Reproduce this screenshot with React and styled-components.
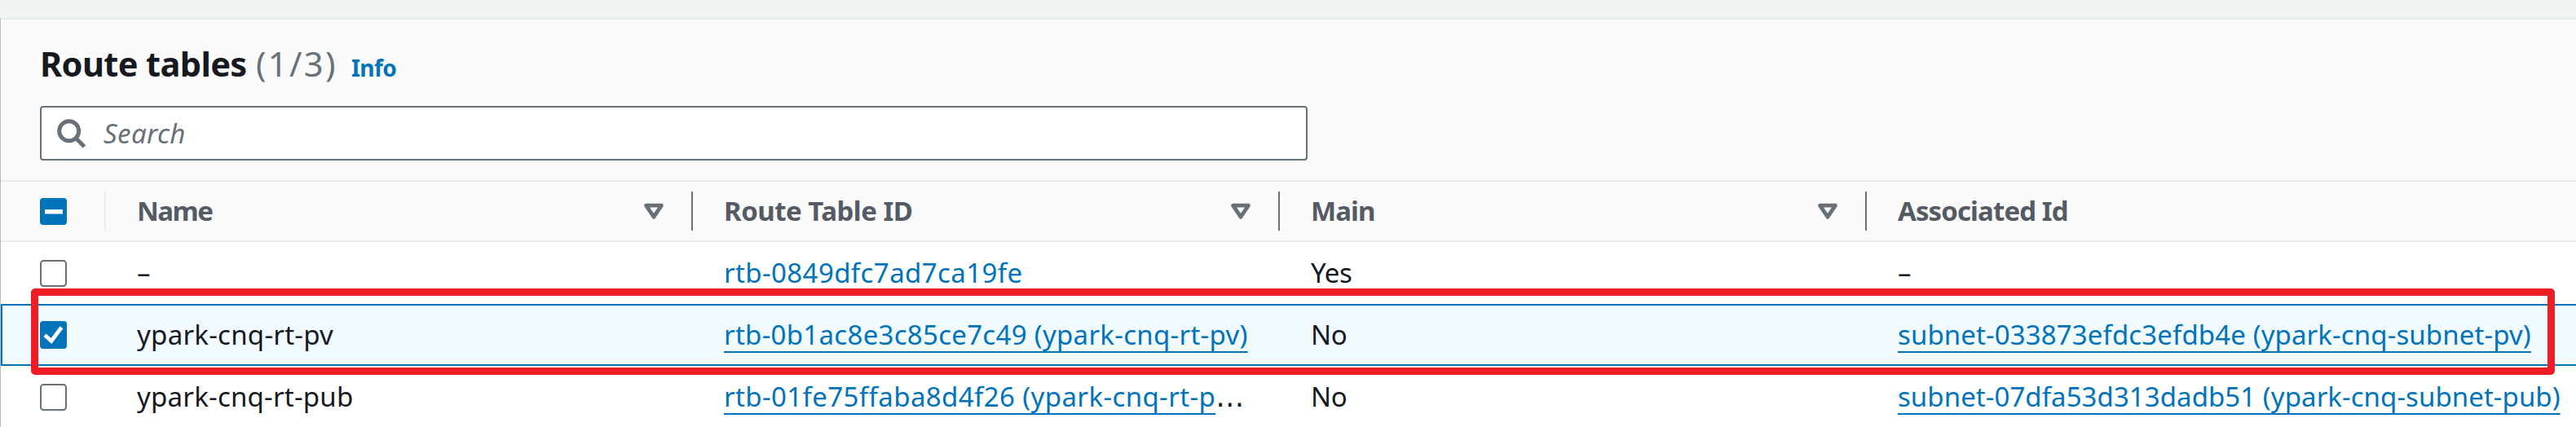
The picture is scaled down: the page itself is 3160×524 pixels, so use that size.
import React from "react";
import styled, { createGlobalStyle, css } from "styled-components";

const color = {
  ink: "#16191f",
  muted: "#687078",
  heading: "#545b64",
  blue: "#0073bb",
  line: "#eaeded",
  panel: "#fafafa",
  selected: "#f1faff",
  highlight: "#ee1c25",
};

const GlobalStyle = createGlobalStyle`
  * { box-sizing: border-box; }
  body {
    margin: 0;
    background: #f2f3f3;
    color: ${color.ink};
    font-family: "Noto Sans", "Open Sans", sans-serif;
    font-size: 33px;
  }
`;

const Page = styled.main`
  width: 3160px;
  height: 524px;
  padding-top: 22px;
  overflow: hidden;
  background: #f2f3f3;
`;

const Panel = styled.section`
  position: relative;
  height: 510px;
  border-top: 2px solid ${color.line};
  border-left: 1px solid #b4bcbe;
  background: #fff;
`;

const Header = styled.header`
  display: flex;
  flex-direction: column;
  gap: 23px;
  height: 199px;
  padding: 25px 48px 0;
  border-bottom: 2px solid ${color.line};
  background: ${color.panel};
`;

const TitleRow = styled.div`
  display: flex;
  align-items: baseline;
  height: 58px;
  line-height: 58px;
  white-space: nowrap;
`;

const Title = styled.h2`
  margin: 0;
  width: 265px;
  font-size: 41.5px;
  font-weight: 700;
  letter-spacing: -0.6px;
`;

const Counter = styled.span`
  width: 117px;
  color: ${color.muted};
  font-size: 41.5px;
  letter-spacing: 2.4px;
`;

const InfoLink = styled.a`
  color: ${color.blue};
  font-size: 28px;
  font-weight: 700;
  letter-spacing: -0.6px;
`;

const SearchBox = styled.div`
  display: flex;
  align-items: center;
  gap: 21px;
  width: 1555px;
  height: 67px;
  padding-left: 19px;
  border: 2px solid ${color.muted};
  border-radius: 4px;
  background: #fff;
`;

const Placeholder = styled.span`
  color: ${color.muted};
  font-style: italic;
  letter-spacing: 0.4px;
`;

const Grid = css`
  display: grid;
  grid-template-columns: 127px 720px 720px 720px 1fr;
`;

const HeadRow = styled.div`
  ${Grid}
  height: 74px;
  align-items: center;
  border-bottom: 2px solid ${color.line};
  background: ${color.panel};
`;

const HeadCell = styled.div`
  display: flex;
  align-items: center;
  justify-content: space-between;
  height: 48px;
  padding: 0 34px 1px 38px;
  border-left: 2px solid ${(p) => (p.$light ? color.line : color.muted)};
  color: ${color.heading};
  font-weight: 700;
  letter-spacing: ${(p) => p.$track}px;
  white-space: nowrap;
`;

const Row = styled.div`
  ${Grid}
  height: 76px;
  align-items: stretch;
  ${(p) =>
    p.$selected &&
    css`
      background: ${color.selected};
      box-shadow: inset 0 2px ${color.blue}, inset 0 -2px ${color.blue}, inset 2px 0 ${color.blue};
    `}
`;

const CheckCell = styled.div`
  display: flex;
  align-items: center;
  padding-left: 48px;
`;

const Cell = styled.div`
  height: 76px;
  padding-left: 40px;
  line-height: 76px;
  letter-spacing: ${(p) => p.$track || 0}px;
  white-space: nowrap;
`;

const Link = styled.a`
  color: ${color.blue};
  text-decoration: ${(p) => (p.$underlined ? "underline" : "none")};
  text-decoration-thickness: 2px;
  text-decoration-skip-ink: none;
  text-underline-offset: 8px;
`;

const Ellipsis = styled.span`
  font-family: "DejaVu Sans", sans-serif;
  font-size: 35px;
  line-height: 1;
`;

const Highlight = styled.div`
  position: absolute;
  top: 330.4px;
  left: 36.5px;
  width: 3096px;
  height: 105.4px;
  border: 9.4px solid ${color.highlight};
  border-radius: 5px;
`;

const Icon = styled.svg`
  display: block;
  flex: none;
`;

function SearchIcon() {
  return (
    <Icon width="36" height="36" viewBox="0 0 36 36" fill="none" stroke={color.muted} strokeWidth="5">
      <circle cx="14.7" cy="14.8" r="12" />
      <path d="M23 23.5L33.5 34" />
    </Icon>
  );
}

function SortIcon() {
  return (
    <Icon width="24" height="20" viewBox="0 0 24 20" fill="none" stroke={color.muted} strokeWidth="4.8" strokeLinejoin="round">
      <path d="M2.6 3.2H21.4L12 17.2Z" />
    </Icon>
  );
}

function Checkbox({ state }) {
  return (
    <Icon width="33" height="34" viewBox="0 0 33 34" fill="none">
      {state === "off" && (
        <rect x="1" y="2" width="31" height="31" rx="3.4" fill="#fff" stroke={color.muted} strokeWidth="2" />
      )}
      {state === "mixed" && (
        <>
          <rect y="1" width="33" height="33" rx="4" fill={color.blue} />
          <path d="M6 17.8H28" stroke="#fff" strokeWidth="5.4" />
        </>
      )}
      {state === "on" && (
        <>
          <rect width="33" height="34" rx="4" fill={color.blue} />
          <path d="M6 17.3L14 24.5L26.5 7.8" stroke="#fff" strokeWidth="4.8" />
        </>
      )}
    </Icon>
  );
}

const columns = [
  { label: "Name", track: -1.5, light: true, sortable: true },
  { label: "Route Table ID", track: -0.5, sortable: true },
  { label: "Main", track: -0.9, sortable: true },
  { label: "Associated Id", track: -0.9 },
];

const rows = [
  {
    name: { text: "–" },
    id: { text: "rtb-0849dfc7ad7ca19fe", track: 0.4, link: true },
    main: { text: "Yes", track: -0.3 },
    assoc: { text: "–" },
  },
  {
    selected: true,
    name: { text: "ypark-cnq-rt-pv", track: 0.26 },
    id: { text: "rtb-0b1ac8e3c85ce7c49 (ypark-cnq-rt-pv)", track: 0.29, link: true, underlined: true },
    main: { text: "No", track: -0.3 },
    assoc: { text: "subnet-033873efdc3efdb4e (ypark-cnq-subnet-pv)", track: 0.11, link: true, underlined: true },
  },
  {
    name: { text: "ypark-cnq-rt-pub", track: 0.23 },
    id: { text: "rtb-01fe75ffaba8d4f26 (ypark-cnq-rt-p", track: 0.39, link: true, underlined: true, shortened: true },
    main: { text: "No", track: -0.3 },
    assoc: { text: "subnet-07dfa53d313dadb51 (ypark-cnq-subnet-pub)", track: 0.06, link: true, underlined: true },
  },
];

function DataCell({ value }) {
  return (
    <Cell $track={value.track}>
      {value.link ? <Link $underlined={value.underlined}>{value.text}</Link> : value.text}
      {value.shortened && <Ellipsis>…</Ellipsis>}
    </Cell>
  );
}

export default function App() {
  return (
    <>
      <GlobalStyle />
      <Page>
        <Panel>
          <Header>
            <TitleRow>
              <Title>Route tables</Title>
              <Counter>(1/3)</Counter>
              <InfoLink>Info</InfoLink>
            </TitleRow>
            <SearchBox>
              <SearchIcon />
              <Placeholder>Search</Placeholder>
            </SearchBox>
          </Header>
          <HeadRow>
            <CheckCell>
              <Checkbox state="mixed" />
            </CheckCell>
            {columns.map((c) => (
              <HeadCell key={c.label} $light={c.light} $track={c.track}>
                {c.label}
                {c.sortable && <SortIcon />}
              </HeadCell>
            ))}
          </HeadRow>
          {rows.map((r) => (
            <Row key={r.id.text} $selected={r.selected}>
              <CheckCell>
                <Checkbox state={r.selected ? "on" : "off"} />
              </CheckCell>
              <DataCell value={r.name} />
              <DataCell value={r.id} />
              <DataCell value={r.main} />
              <DataCell value={r.assoc} />
            </Row>
          ))}
          <Highlight />
        </Panel>
      </Page>
    </>
  );
}
